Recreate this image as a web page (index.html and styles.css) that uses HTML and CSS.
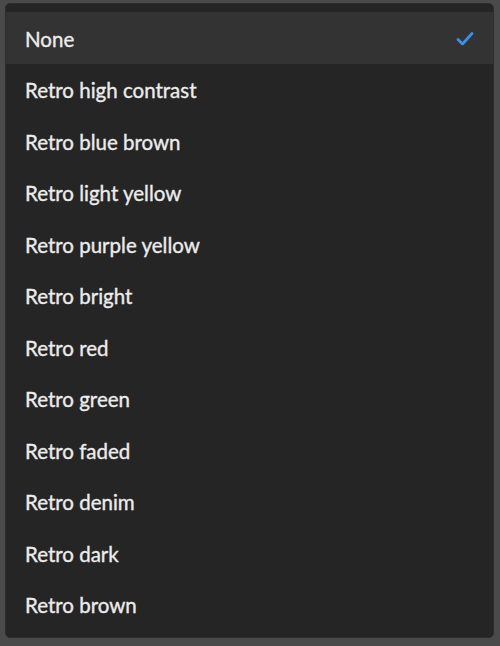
FILE: index.html
```html
<!DOCTYPE html>
<html>
<head>
<meta charset="utf-8">
<link rel="stylesheet" href="styles.css">
</head>
<body>
<div class="frame">
  <ul class="menu">
    <li class="item selected"><span>None</span>
      <svg class="check" width="18" height="16" viewBox="0 0 18 16"><path d="M2 8.5 L6.5 13 L16 2.5" fill="none" stroke="#3d8fe8" stroke-width="2.8" stroke-linecap="round" stroke-linejoin="round"/></svg>
    </li>
    <li class="item"><span>Retro high contrast</span></li>
    <li class="item"><span>Retro blue brown</span></li>
    <li class="item"><span>Retro light yellow</span></li>
    <li class="item"><span>Retro purple yellow</span></li>
    <li class="item"><span>Retro bright</span></li>
    <li class="item"><span>Retro red</span></li>
    <li class="item"><span>Retro green</span></li>
    <li class="item"><span>Retro faded</span></li>
    <li class="item"><span>Retro denim</span></li>
    <li class="item"><span>Retro dark</span></li>
    <li class="item"><span>Retro brown</span></li>
  </ul>
</div>
</body>
</html>
```
FILE: styles.css
```css
html, body {
  margin: 0;
  padding: 0;
  width: 500px;
  height: 646px;
  background: #4a4a4a;
  overflow: hidden;
}
.frame {
  box-sizing: border-box;
  width: 500px;
  height: 646px;
  padding: 3px 6px 8px 5px;
  display: flex;
}
.menu {
  list-style: none;
  margin: 0;
  flex: 1;
  padding: 8px 0 7px 0;
  background: #252525;
  border: 1px solid #2d2d2d;
  border-radius: 5px;
  display: flex;
  flex-direction: column;
  font-family: Lato, "Open Sans", sans-serif;
  font-size: 20.5px;
  color: #ececec;
  -webkit-text-stroke: 0.35px #ececec;
}
.item {
  height: 51.5px;
  flex: none;
  display: flex;
  align-items: center;
  justify-content: space-between;
  padding: 2px 19px 0 19px;
  box-sizing: border-box;
}
.selected {
  background: #333333;
}
.check {
  margin-right: 0;
  margin-top: 0;
}
```
